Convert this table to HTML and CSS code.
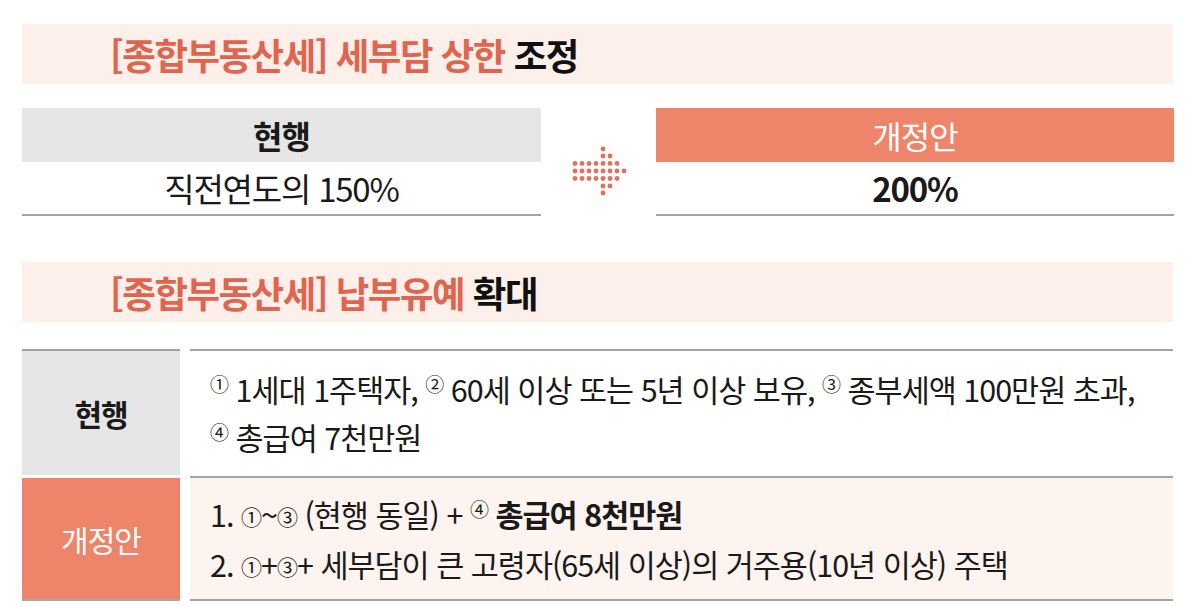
FILE: index.html
```html
<!DOCTYPE html>
<html lang="ko">
<head>
<meta charset="utf-8">
<link rel="stylesheet" href="styles.css">
</head>
<body>
<div class="page">
  <div class="title-bar"><span class="accent">[종합부동산세] 세부담 상한</span>&nbsp;<span class="dark">조정</span></div>

  <div class="compare">
    <div class="col">
      <div class="head head-gray">현행</div>
      <div class="value">직전연도의 150%</div>
    </div>
    <div class="arrow-col">
      <svg class="arrow" width="56" height="50" viewBox="0 0 56 50">
        <g fill="#e3705a">
          <circle cx="31" cy="3" r="2.4"/>
          <circle cx="31" cy="10" r="2.4"/><circle cx="38" cy="10" r="2.4"/>
          <circle cx="3" cy="17.5" r="2.4"/><circle cx="10" cy="17.5" r="2.4"/><circle cx="17" cy="17.5" r="2.4"/><circle cx="24" cy="17.5" r="2.4"/><circle cx="31" cy="17.5" r="2.4"/><circle cx="38" cy="17.5" r="2.4"/><circle cx="45" cy="17.5" r="2.4"/>
          <circle cx="3" cy="25" r="2.4"/><circle cx="10" cy="25" r="2.4"/><circle cx="17" cy="25" r="2.4"/><circle cx="24" cy="25" r="2.4"/><circle cx="31" cy="25" r="2.4"/><circle cx="38" cy="25" r="2.4"/><circle cx="45" cy="25" r="2.4"/><circle cx="52" cy="25" r="2.4"/>
          <circle cx="3" cy="32.5" r="2.4"/><circle cx="10" cy="32.5" r="2.4"/><circle cx="17" cy="32.5" r="2.4"/><circle cx="24" cy="32.5" r="2.4"/><circle cx="31" cy="32.5" r="2.4"/><circle cx="38" cy="32.5" r="2.4"/><circle cx="45" cy="32.5" r="2.4"/>
          <circle cx="31" cy="40" r="2.4"/><circle cx="38" cy="40" r="2.4"/>
          <circle cx="31" cy="47" r="2.4"/>
        </g>
      </svg>
    </div>
    <div class="col">
      <div class="head head-orange">개정안</div>
      <div class="value bold">200%</div>
    </div>
  </div>

  <div class="title-bar title-2"><span class="accent">[종합부동산세] 납부유예</span>&nbsp;<span class="dark">확대</span></div>

  <div class="table">
    <div class="label label-gray">현행</div>
    <div class="cell">
      <div class="line"><sup class="cn">①</sup> 1세대 1주택자, <sup class="cn">②</sup> 60세 이상 또는 5년 이상 보유, <sup class="cn">③</sup> 종부세액 100만원 초과,</div>
      <div class="line"><sup class="cn">④</sup> 총급여 7천만원</div>
    </div>
    <div class="label label-orange">개정안</div>
    <div class="cell cell-pink">
      <div class="line">1. <span class="ci">①</span>~<span class="ci">③</span> (현행 동일) + <sup class="cn">④</sup> <b>총급여 8천만원</b></div>
      <div class="line">2. <span class="ci">①</span>+<span class="ci">③</span>+ 세부담이 큰 고령자(65세 이상)의 거주용(10년 이상) 주택</div>
    </div>
  </div>
</div>
</body>
</html>
```

FILE: styles.css
```css
* { box-sizing: border-box; }
html, body {
  margin: 0;
  padding: 0;
  background: #ffffff;
}
body {
  font-family: "Noto Sans CJK KR", "Noto Sans", sans-serif;
  color: #1a1a1a;
}
.page {
  width: 1200px;
  padding: 24px 27px 0 22px;
}
.title-bar {
  height: 60px;
  background: #fdf0eb;
  display: flex;
  align-items: center;
  padding-left: 88px;
  font-size: 36.5px;
  font-weight: 700;
  letter-spacing: -1.5px;
}
.title-bar .accent { color: #e0654f; }
.title-bar .dark { color: #111111; }

.compare {
  display: grid;
  grid-template-columns: 519px 115px 518px;
  margin-top: 24px;
}
.col {
  display: flex;
  flex-direction: column;
}
.head {
  height: 54px;
  display: flex;
  align-items: center;
  justify-content: center;
  font-size: 32px;
  letter-spacing: -1px;
}
.head-gray {
  background: #e6e6e6;
  font-weight: 700;
  color: #1a1a1a;
}
.head-orange {
  background: #ee8469;
  color: #ffffff;
  font-weight: 400;
}
.value {
  height: 54px;
  display: flex;
  align-items: center;
  justify-content: center;
  font-size: 33px;
  letter-spacing: -1.2px;
  border-bottom: 2px solid #a3a3a3;
  color: #1a1a1a;
}
.value.bold { font-weight: 700; }
.arrow-col {
  display: flex;
  justify-content: center;
  padding-top: 38px;
  padding-left: 2px;
}

.title-2 { margin-top: 46px; }

.table {
  display: grid;
  grid-template-columns: 158px 983px;
  column-gap: 10px;
  margin-top: 27px;
}
.label {
  display: flex;
  align-items: center;
  justify-content: center;
  font-size: 30px;
  letter-spacing: -1px;
}
.label-gray {
  background: #e6e6e6;
  border-top: 2px solid #a3a3a3;
  height: 126px;
  font-weight: 700;
  color: #1a1a1a;
}
.label-orange {
  background: #ee8469;
  color: #ffffff;
  height: 123px;
  margin-top: 2px;
  border-bottom: 2px solid #b0a8a6;
}
.cell {
  border-top: 2px solid #a3a3a3;
  padding: 14px 0 0 20px;
  height: 127px;
}
.cell-pink {
  background: #fdf3ef;
  border-bottom: 2px solid #a3a3a3;
  height: 125px;
  padding-top: 12px;
}
.line {
  font-size: 30.5px;
  line-height: 48px;
  letter-spacing: -1px;
  white-space: nowrap;
  color: #1a1a1a;
}
.line b { font-weight: 700; }
.cn {
  font-size: 19px;
  vertical-align: 10px;
  line-height: 0;
}
.ci {
  font-size: 21px;
  vertical-align: 2px;
}
```
